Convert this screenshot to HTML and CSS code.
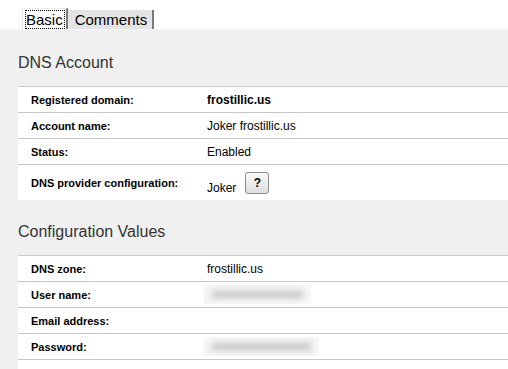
FILE: index.html
```html
<!DOCTYPE html>
<html lang="en">
<head>
    <meta charset="UTF-8">
    <meta name="viewport" content="width=device-width, initial-scale=1.0">
    <title>DNS Account</title>
    <link rel="stylesheet" href="styles.css">
</head>
<body>
    <div class="tabs">
        <div class="tab active"><span class="focus">Basic</span></div>
        <div class="tab">Comments</div>
    </div>
    <div class="panel">
        <h2>DNS Account</h2>
        <table class="fields">
            <tr><td class="label">Registered domain:</td><td class="value strong">frostillic.us</td></tr>
            <tr><td class="label">Account name:</td><td class="value">Joker frostillic.us</td></tr>
            <tr><td class="label">Status:</td><td class="value">Enabled</td></tr>
            <tr class="tall">
                <td class="label">DNS provider configuration:</td>
                <td class="value">
                    <div class="provider">
                        <span class="provider-name">Joker</span>
                        <button class="help">?</button>
                    </div>
                </td>
            </tr>
        </table>

        <h2>Configuration Values</h2>
        <table class="fields">
            <tr><td class="label">DNS zone:</td><td class="value">frostillic.us</td></tr>
            <tr><td class="label">User name:</td><td class="value"><span class="hidden w107"><span class="smudge"></span></span></td></tr>
            <tr><td class="label">Email address:</td><td class="value"></td></tr>
            <tr><td class="label">Password:</td><td class="value"><span class="hidden w115"><span class="smudge"></span></span></td></tr>
            <tr><td class="label">Authorization key:</td><td class="value"></td></tr>
        </table>
    </div>
</body>
</html>
```

FILE: styles.css
```css
body {
    margin: 0;
    font-family: "Liberation Sans", Arial, sans-serif;
    background-color: #ffffff;
    color: #000000;
    overflow: hidden;
}
.tabs {
    display: flex;
    align-items: flex-end;
    height: 29px;
    padding-left: 22px;
}
.tab {
    font-size: 15px;
    line-height: 19px;
    height: 19px;
    padding: 0 5px 0 7px;
    background-color: #e4e4e4;
    border-right: 2px solid #7a7a7a;
}
.tab.active {
    height: 21px;
    padding: 1px 1px 0 2px;
    box-sizing: border-box;
    background-color: #ffffff;
    border-left: 1px solid #e2e2e2;
    border-top: 1px solid #ececec;
}
.focus {
    display: inline-block;
    height: 19px;
    padding: 0 2px 0 1px;
    outline: 1px dotted #000000;
    outline-offset: -1px;
}
.panel {
    background-color: #f0f0f0;
    border-top: 1px solid #f7f7f7;
    padding: 23px 0 0 18px;
    height: 400px;
}
h2 {
    margin: 0 0 13px 0;
    font-size: 16px;
    font-weight: normal;
    line-height: 20px;
    color: #333333;
}
.fields {
    width: 100%;
    border-collapse: collapse;
    background-color: #ffffff;
    border-top: 1px solid #cccccc;
    margin-bottom: 22px;
}
.fields td {
    height: 25px;
    padding: 0;
    border-bottom: 1px solid #c8c8c8;
    vertical-align: middle;
}
.fields tr:last-child td {
    border-bottom: none;
}
.fields tr.tall td {
    height: 35px;
}
.label {
    width: 176px;
    padding-left: 13px !important;
    font-size: 11px;
    font-weight: bold;
}
.value {
    font-size: 12px;
}
.value.strong {
    font-weight: bold;
}
.provider {
    display: flex;
    align-items: center;
}
.provider-name {
    padding-top: 10px;
    line-height: 14px;
}
.help {
    margin-left: 9px;
    width: 24px;
    height: 22px;
    padding: 0;
    font-family: "Liberation Sans", Arial, sans-serif;
    font-size: 12px;
    font-weight: bold;
    color: #000000;
    background: linear-gradient(#fbfbfb, #dedede);
    border: 1px solid #8c8c8c;
    border-radius: 3px;
}
.hidden {
    display: inline-block;
    height: 19px;
    margin-left: -3px;
    vertical-align: middle;
    background-color: #f6f6f6;
    overflow: hidden;
}
.w107 {
    width: 107px;
}
.w115 {
    width: 115px;
}
.smudge {
    display: block;
    margin: 6px 8px 0 8px;
    height: 7px;
    background-color: #c4c4c4;
    filter: blur(3px);
}
```
